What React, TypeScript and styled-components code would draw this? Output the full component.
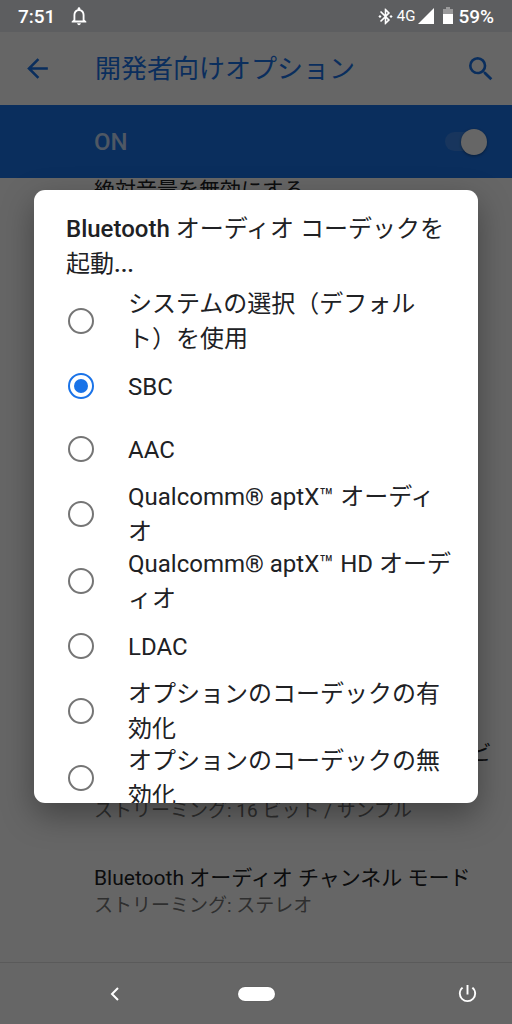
import React, { useState } from "react";
import styled, { createGlobalStyle } from "styled-components";
import {
  MdArrowBack,
  MdBluetoothConnected,
  MdNotificationsNone,
  MdPowerSettingsNew,
  MdSearch,
} from "react-icons/md";

const GlobalStyle = createGlobalStyle`
  * { box-sizing: border-box; }
  body {
    margin: 0;
    font-family: Roboto, "Noto Sans CJK JP", sans-serif;
    text-spacing-trim: space-all;
    background: #666;
  }
  button { border: 0; padding: 0; background: none; color: inherit; font: inherit; }
  h1, h2, h3, p, ul { margin: 0; padding: 0; font-weight: 400; }
  ul { list-style: none; }
  svg { display: block; }
`;

const Phone = styled.div`
  display: flex;
  flex-direction: column;
  height: 100vh;
  overflow: hidden;
`;

const StatusBar = styled.header`
  display: flex;
  align-items: center;
  justify-content: space-between;
  height: 32px;
  padding: 0 18px;
  background: #5d5e60;
  color: #fff;
  font-size: 19px;
  font-weight: 500;
`;

const StatusGroup = styled.div<{ $gap: number }>`
  display: flex;
  align-items: center;
  gap: ${(p) => p.$gap}px;
`;

const Network = styled.span`
  font-size: 15px;
  font-weight: 400;
`;

const Body = styled.div`
  position: relative;
  flex: 1;
  min-height: 0;
`;

const Settings = styled.main`
  display: flex;
  flex-direction: column;
  height: 100%;
  background: #fff;
  color: #202124;
`;

const Toolbar = styled.div`
  display: flex;
  align-items: center;
  height: 73px;
  padding: 0 15px 0 22px;
  color: #1a73e8;
`;

const ToolbarTitle = styled.h1`
  flex: 1;
  padding-left: 42px;
  font-size: 26px;
  line-height: 38px;
`;

const MasterSwitch = styled.label`
  display: flex;
  align-items: center;
  justify-content: space-between;
  height: 73px;
  padding: 0 25px 0 94px;
  background: #1a73e8;
  color: rgba(255, 255, 255, 0.75);
  font-size: 24px;
  font-weight: 500;
`;

const Switch = styled.input`
  appearance: none;
  display: flex;
  align-items: center;
  justify-content: flex-end;
  width: 42px;
  height: 26px;
  margin: 0;
  border-radius: 13px;
  &::before {
    content: "";
    width: 26px;
    height: 26px;
    border-radius: 50%;
    background: #fff;
    box-shadow: 0 1px 3px rgba(0, 0, 0, 0.4);
  }
  &::after {
    content: "";
    order: -1;
    width: 30px;
    height: 19px;
    margin-right: -14px;
    border-radius: 10px;
    background: #3c86e8;
  }
`;

const Viewport = styled.div`
  flex: 1;
  min-height: 0;
  overflow: hidden;
`;

const PreferenceList = styled.ul`
  display: flex;
  flex-direction: column;
  height: calc(100% + 69px);
  margin-top: -23px;
`;

const Preference = styled.li`
  padding: 20px 16px 20px 94px;
  &:first-child {
    margin-bottom: auto;
  }
`;

const PreferenceTitle = styled.h3`
  font-size: 21px;
  line-height: 30px;
`;

const PreferenceSummary = styled.p`
  color: #757575;
  font-size: 19px;
  line-height: 25px;
`;

const Scrim = styled.div`
  position: absolute;
  inset: 0;
  display: flex;
  padding: 158px 34px 159px;
  background: rgba(0, 0, 0, 0.6);
`;

const Dialog = styled.section`
  display: flex;
  flex-direction: column;
  width: 100%;
  overflow: hidden;
  border-radius: 11px;
  background: #fff;
  color: #202124;
  box-shadow: 0 12px 32px rgba(0, 0, 0, 0.35);
`;

const DialogTitle = styled.h2`
  padding: 22px 32px 5px;
  font-size: 24px;
  line-height: 35px;
`;

const Latin = styled.span`
  font-weight: 500;
`;

const Options = styled.div`
  flex: 1;
  min-height: 0;
  overflow: hidden;
`;

const Option = styled.label`
  display: flex;
  align-items: center;
  gap: 34px;
  min-height: 63px;
  padding: 0 26px 0 34px;
  font-size: 24px;
  line-height: 35px;
`;

const OptionText = styled.span`
  flex: 1;
  margin-bottom: -3px;
  line-break: normal;
`;

const Radio = styled.input`
  appearance: none;
  display: grid;
  place-items: center;
  flex: none;
  width: 26px;
  height: 26px;
  margin: 0;
  border: 2px solid #757575;
  border-radius: 50%;
  &:checked {
    border-color: #1a73e8;
  }
  &:checked::before {
    content: "";
    width: 14px;
    height: 14px;
    border-radius: 50%;
    background: #1a73e8;
  }
`;

const NavBar = styled.nav`
  display: grid;
  grid-template-columns: 1fr auto 1fr;
  align-items: center;
  height: 62px;
  border-top: 1px solid #5a5a5a;
  background: #666;
  color: #fff;
`;

const NavSide = styled.div<{ $end?: boolean }>`
  display: flex;
  justify-content: ${(p) => (p.$end ? "flex-end" : "flex-start")};
  padding: 0 21px 0 91px;
`;

const NavButton = styled.button`
  display: grid;
  place-items: center;
  width: 48px;
  height: 48px;
`;

const HomePill = styled.span`
  width: 37px;
  height: 14px;
  border-radius: 7px;
  background: #fff;
  box-shadow: 0 0 1px #444;
`;

const codecs = [
  "システムの選択（デフォルト）を使用",
  "SBC",
  "AAC",
  "Qualcomm® aptX™ オーディオ",
  "Qualcomm® aptX™ HD オーディオ",
  "LDAC",
  "オプションのコーデックの有効化",
  "オプションのコーデックの無効化",
];

const preferences = [
  { title: "絶対音量を無効にする" },
  {
    title: "サンプルあたりの Bluetooth オーディオ ビット数",
    summary: "ストリーミング: 16 ビット / サンプル",
  },
  {
    title: "Bluetooth オーディオ チャンネル モード",
    summary: "ストリーミング: ステレオ",
  },
  { title: "Bluetooth オーディオ LDAC コーデック" },
];

export default function App() {
  const [codec, setCodec] = useState("SBC");

  return (
    <Phone lang="ja">
      <GlobalStyle />
      <StatusBar>
        <StatusGroup $gap={13}>
          <span>7:51</span>
          <MdNotificationsNone size={22} />
        </StatusGroup>
        <StatusGroup $gap={2}>
          <MdBluetoothConnected size={19} />
          <Network>4G</Network>
          <svg width="18" height="18" viewBox="0 0 18 18" fill="#fff">
            <path d="M17 1V17H1Z" />
          </svg>
          <svg width="19" height="18" viewBox="0 0 19 18">
            <path d="M9 0h4v2h3v6H6V2h3z" fill="#9a9a9b" />
            <path d="M6 7h10v10H6z" fill="#fff" />
          </svg>
          <span>59%</span>
        </StatusGroup>
      </StatusBar>

      <Body>
        <Settings>
          <Toolbar>
            <button aria-label="戻る">
              <MdArrowBack size={31} />
            </button>
            <ToolbarTitle>開発者向けオプション</ToolbarTitle>
            <button aria-label="検索">
              <MdSearch size={32} />
            </button>
          </Toolbar>
          <MasterSwitch>
            ON
            <Switch type="checkbox" role="switch" defaultChecked />
          </MasterSwitch>
          <Viewport>
            <PreferenceList>
              {preferences.map((item) => (
                <Preference key={item.title}>
                  <PreferenceTitle>{item.title}</PreferenceTitle>
                  {item.summary && (
                    <PreferenceSummary>{item.summary}</PreferenceSummary>
                  )}
                </Preference>
              ))}
            </PreferenceList>
          </Viewport>
        </Settings>

        <Scrim>
          <Dialog role="dialog" aria-modal="true" aria-labelledby="codec-title">
            <DialogTitle id="codec-title">
              <Latin>Bluetooth</Latin> オーディオ コーデックを起動<Latin>...</Latin>
            </DialogTitle>
            <Options role="radiogroup" aria-labelledby="codec-title">
              {codecs.map((name) => (
                <Option key={name}>
                  <Radio
                    type="radio"
                    name="codec"
                    checked={codec === name}
                    onChange={() => setCodec(name)}
                  />
                  <OptionText>{name}</OptionText>
                </Option>
              ))}
            </Options>
          </Dialog>
        </Scrim>
      </Body>

      <NavBar>
        <NavSide>
          <NavButton aria-label="戻る">
            <svg width="14" height="18" viewBox="0 0 14 18" fill="none" stroke="#fff" strokeWidth="2">
              <path d="M10 3L4 9l6 6" />
            </svg>
          </NavButton>
        </NavSide>
        <NavButton aria-label="ホーム">
          <HomePill />
        </NavButton>
        <NavSide $end>
          <NavButton aria-label="電源">
            <MdPowerSettingsNew size={23} />
          </NavButton>
        </NavSide>
      </NavBar>
    </Phone>
  );
}
